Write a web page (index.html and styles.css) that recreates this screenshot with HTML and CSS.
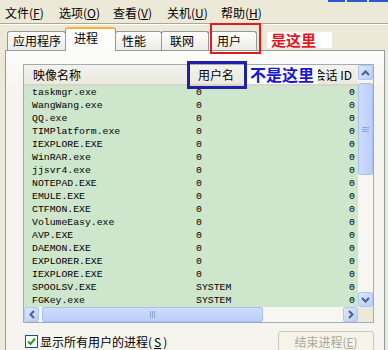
FILE: index.html
```html
<!DOCTYPE html>
<html lang="zh-CN">

  <head>
    <meta charset="UTF-8">
    <meta name="viewport" content="width=device-width, initial-scale=1.0">
    <title>Windows 任务管理器</title>
    <link rel="stylesheet" href="styles.css">
  </head>

  <body>
    <div class="caption-edge">
      <span class="cap-btn min"></span>
      <span class="cap-btn max"></span>
      <span class="cap-btn close"></span>
    </div>

    <div class="menubar">
      <span class="menu">文件(<u>F</u>)</span>
      <span class="menu">选项(<u>O</u>)</span>
      <span class="menu">查看(<u>V</u>)</span>
      <span class="menu">关机(<u>U</u>)</span>
      <span class="menu">帮助(<u>H</u>)</span>
    </div>
    <div class="menu-sep"></div>

    <div class="tabs">
      <div class="tab w-app">应用程序</div>
      <div class="tab active">进程</div>
      <div class="tab w-perf">性能</div>
      <div class="tab w-net">联网</div>
      <div class="tab w-user">用户</div>
      <!-- 标注：红框 -->
      <div class="mark-red"></div>
      <div class="note note-red">是这里</div>
    </div>

    <div class="pane">
      <div class="listbox">
        <div class="list">
          <div class="head">
            <div class="c-name">映像名称</div>
            <div class="c-user">用户名</div>
            <div class="c-sid">会话 ID</div>
          </div>
          <div class="rows">
            <div class="row"><span class="c-name">taskmgr.exe</span><span class="c-user">0</span><span class="c-sid">0</span></div>
            <div class="row"><span class="c-name">WangWang.exe</span><span class="c-user">0</span><span class="c-sid">0</span></div>
            <div class="row"><span class="c-name">QQ.exe</span><span class="c-user">0</span><span class="c-sid">0</span></div>
            <div class="row"><span class="c-name">TIMPlatform.exe</span><span class="c-user">0</span><span class="c-sid">0</span></div>
            <div class="row"><span class="c-name">IEXPLORE.EXE</span><span class="c-user">0</span><span class="c-sid">0</span></div>
            <div class="row"><span class="c-name">WinRAR.exe</span><span class="c-user">0</span><span class="c-sid">0</span></div>
            <div class="row"><span class="c-name">jjsvr4.exe</span><span class="c-user">0</span><span class="c-sid">0</span></div>
            <div class="row"><span class="c-name">NOTEPAD.EXE</span><span class="c-user">0</span><span class="c-sid">0</span></div>
            <div class="row"><span class="c-name">EMULE.EXE</span><span class="c-user">0</span><span class="c-sid">0</span></div>
            <div class="row"><span class="c-name">CTFMON.EXE</span><span class="c-user">0</span><span class="c-sid">0</span></div>
            <div class="row"><span class="c-name">VolumeEasy.exe</span><span class="c-user">0</span><span class="c-sid">0</span></div>
            <div class="row"><span class="c-name">AVP.EXE</span><span class="c-user">0</span><span class="c-sid">0</span></div>
            <div class="row"><span class="c-name">DAEMON.EXE</span><span class="c-user">0</span><span class="c-sid">0</span></div>
            <div class="row"><span class="c-name">EXPLORER.EXE</span><span class="c-user">0</span><span class="c-sid">0</span></div>
            <div class="row"><span class="c-name">IEXPLORE.EXE</span><span class="c-user">0</span><span class="c-sid">0</span></div>
            <div class="row"><span class="c-name">SPOOLSV.EXE</span><span class="c-user">SYSTEM</span><span class="c-sid">0</span></div>
            <div class="row"><span class="c-name">FGKey.exe</span><span class="c-user">SYSTEM</span><span class="c-sid">0</span></div>
          </div>
        </div>

        <div class="vscroll">
          <div class="sb-btn">
            <svg width="9" height="6" viewBox="0 0 9 6"><path d="M1 5 L4.5 1.5 L8 5" fill="none" stroke="#4d6185" stroke-width="2"/></svg>
          </div>
          <div class="sb-thumb v">
            <svg width="7" height="7" viewBox="0 0 7 7"><path d="M0 1.5h7M0 3.5h7M0 5.5h7" stroke="#8aa4dc" stroke-width="1"/></svg>
          </div>
          <div class="sb-track"></div>
          <div class="sb-btn">
            <svg width="9" height="6" viewBox="0 0 9 6"><path d="M1 1 L4.5 4.5 L8 1" fill="none" stroke="#4d6185" stroke-width="2"/></svg>
          </div>
        </div>

        <div class="hscroll">
          <div class="sb-btn">
            <svg width="6" height="9" viewBox="0 0 6 9"><path d="M5 1 L1.5 4.5 L5 8" fill="none" stroke="#4d6185" stroke-width="2"/></svg>
          </div>
          <div class="sb-thumb h">
            <svg width="7" height="7" viewBox="0 0 7 7"><path d="M1.5 0v7M3.5 0v7M5.5 0v7" stroke="#8aa4dc" stroke-width="1"/></svg>
          </div>
          <div class="sb-track"></div>
          <div class="sb-btn">
            <svg width="6" height="9" viewBox="0 0 6 9"><path d="M1 1 L4.5 4.5 L1 8" fill="none" stroke="#4d6185" stroke-width="2"/></svg>
          </div>
        </div>
        <div class="corner"></div>

        <!-- 标注：蓝框 -->
        <div class="mark-blue"></div>
        <div class="note note-blue">不是这里</div>
      </div>

      <div class="foot">
        <label class="check">
          <span class="box">
            <svg width="9" height="9" viewBox="0 0 9 9"><path d="M1 4.5 L3.5 7 L8 1.5" fill="none" stroke="#21a121" stroke-width="2"/></svg>
          </span>
          显示所有用户的进程(<u>S</u>)
        </label>
        <button class="btn-end" disabled>结束进程(<u>E</u>)</button>
      </div>
    </div>
  </body>

</html>
```

FILE: styles.css
```css
html,
body {
  height: 100%;
  overflow: hidden;
  padding: 0;
  margin: 0;
  background: #ece9d8;
  font: 12px/1 "Noto Sans CJK SC", "Liberation Sans", sans-serif;
  color: #000;
  --paneBg: #f5f4ee;
  --border: #919b9c;
}

/* 标题栏按钮的下沿 */
.caption-edge {
  height: 3px;
  display: flex;
  justify-content: flex-end;
  gap: 2px;
}

.cap-btn {
  display: block;
  height: 2px;
  background: #2b5ad2;
}

.min { width: 17px; }
.max { width: 20px; }
.close { width: 19px; }

/* 菜单 */
.menubar {
  height: 20px;
  display: flex;
  align-items: center;
  padding-left: 5px;
}

.menu {
  width: 54px;
  white-space: nowrap;
}

.menu u,
.check u,
.btn-end u {
  text-decoration: underline;
  text-underline-offset: 1px;
}

.menu-sep {
  border-top: 1px solid #aca899;
  border-bottom: 1px solid #fff;
}

/* 选项卡 */
.tabs {
  height: 25px;
  display: flex;
  align-items: flex-end;
  padding-left: 7px;
  position: relative;
  z-index: 1;
}

.tab {
  box-sizing: border-box;
  height: 19px;
  line-height: 17px;
  padding-left: 5px;
  border: 1px solid var(--border);
  border-bottom: none;
  border-radius: 3px 3px 0 0;
  background: linear-gradient(#fefefe, #ecebe5);
  margin-right: -1px;
}

.w-app { width: 59px; }
.w-perf { width: 47px; padding-left: 6px; }
.w-net { width: 48px; padding-left: 8px; }
.w-user { width: 49px; padding-left: 8px; }

.tab.active {
  width: 51px;
  height: 24px;
  line-height: 18px;
  padding-left: 8px;
  margin-bottom: -1px;
  border-top: 2px solid #f7b23a;
  background: #fcfcfb;
  position: relative;
  z-index: 2;
}

.mark-red {
  position: absolute;
  left: 210px;
  top: -2px;
  width: 51px;
  height: 31px;
  box-sizing: border-box;
  border: 2px solid #e31b1b;
  z-index: 3;
}

.note {
  position: absolute;
  background: #fff;
  font-weight: bold;
  white-space: nowrap;
  z-index: 3;
}

.note-red {
  left: 267px;
  top: 7px;
  width: 65px;
  height: 16px;
  line-height: 16px;
  padding-left: 4px;
  box-sizing: border-box;
  font-size: 15px;
  color: #e8141c;
}

/* 选项卡内容 */
.pane {
  margin: 0 3px 0 5px;
  border: 1px solid var(--border);
  border-bottom: none;
  background: linear-gradient(#fcfcfb, var(--paneBg) 40px);
  height: 299px;
}

.listbox {
  margin: 13px 10px 0 17px;
  border: 1px solid #a3acb4;
  display: grid;
  grid-template-columns: 1fr 15px;
  grid-template-rows: 242px 15px;
  position: relative;
}

.list {
  overflow: hidden;
}

.head {
  height: 21px;
  box-sizing: border-box;
  display: flex;
  align-items: center;
  background: linear-gradient(#f3f2ec, #ebeadf);
  border-bottom: 2px solid #d9d5c6;
}

.head .c-name { padding-left: 9px; }
.head .c-user { padding-left: 10px; }
.head .c-sid { padding-right: 6px; }

.c-name {
  width: 164px;
  box-sizing: border-box;
  padding-left: 8px;
}

.c-user {
  flex: 1;
  padding-left: 8px;
}

.c-sid {
  text-align: right;
  padding-right: 3px;
  white-space: nowrap;
}

.rows {
  height: 221px;
  background: #cde6cc;
  font: 9.8px/13px "Liberation Mono", "DejaVu Sans Mono", monospace;
}

.row {
  display: flex;
  height: 13px;
  white-space: nowrap;
}

/* 滚动条 */
.vscroll,
.hscroll {
  display: flex;
  background: #f7f6f1;
}

.vscroll {
  flex-direction: column;
}

.sb-btn {
  width: 15px;
  height: 15px;
  flex: none;
  box-sizing: border-box;
  border: 1px solid #b3c6f3;
  border-radius: 2px;
  background: linear-gradient(135deg, #dde7fe, #b9cdf8);
  display: flex;
  align-items: center;
  justify-content: center;
}

.sb-thumb {
  box-sizing: border-box;
  border: 1px solid #a8bff2;
  border-radius: 2px;
  background: linear-gradient(90deg, #cedcfd, #bccffa);
  display: flex;
  align-items: center;
  justify-content: center;
}

.sb-thumb.v {
  height: 92px;
  margin-top: 3px;
}

.sb-thumb.h {
  width: 221px;
  margin-left: 3px;
  background: linear-gradient(#cedcfd, #bccffa);
}

.sb-track {
  flex: 1;
}

.corner {
  background: #ece9d8;
}

.mark-blue {
  position: absolute;
  left: 163px;
  top: -4px;
  width: 60px;
  height: 28px;
  box-sizing: border-box;
  border: 3px solid #1f22a6;
  z-index: 3;
}

.note-blue {
  left: 223px;
  top: 0;
  width: 71px;
  height: 19px;
  line-height: 19px;
  padding-left: 3px;
  box-sizing: border-box;
  font-size: 16px;
  color: #1818d2;
}

/* 底部 */
.foot {
  display: flex;
  justify-content: space-between;
  align-items: center;
  margin-top: 8px;
  padding: 0 10px 0 19px;
}

.check {
  display: flex;
  align-items: center;
  gap: 2px;
  white-space: nowrap;
}

.box {
  width: 13px;
  height: 13px;
  box-sizing: border-box;
  border: 1px solid #1c5180;
  background: #fff;
  display: flex;
  align-items: center;
  justify-content: center;
}

.btn-end {
  width: 96px;
  height: 21px;
  border: 1px solid #c9c7ba;
  border-radius: 3px;
  background: #f5f4ea;
  color: #aca899;
  font: inherit;
  padding: 0;
}
```
